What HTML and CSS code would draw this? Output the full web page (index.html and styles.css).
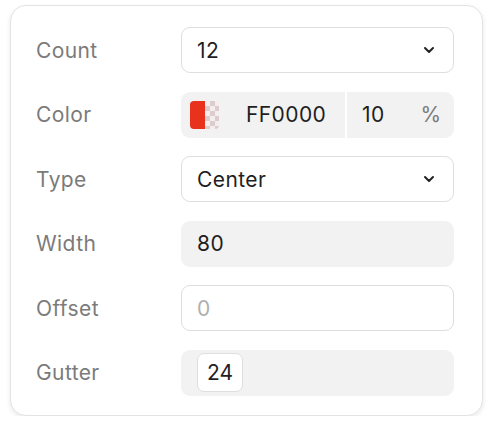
FILE: index.html
```html
<!DOCTYPE html>
<html>
<head>
<meta charset="utf-8">
<link rel="stylesheet" href="styles.css">
</head>
<body>
<div class="card">
  <div class="row">
    <div class="label">Count</div>
    <div class="field select">
      <span class="value">12</span>
      <svg class="chev" width="12" height="8" viewBox="0 0 12 8"><path d="M2 2 L6 6 L10 2" fill="none" stroke="#222" stroke-width="2" stroke-linecap="round" stroke-linejoin="round"/></svg>
    </div>
  </div>
  <div class="row">
    <div class="label">Color</div>
    <div class="field filled color">
      <div class="hex">
        <span class="swatch"><span class="swatch-solid"></span><span class="swatch-alpha"></span></span>
        <span class="value hexval">FF0000</span>
      </div>
      <div class="divider"></div>
      <div class="alpha">
        <span class="value">10</span>
        <span class="pct">%</span>
      </div>
    </div>
  </div>
  <div class="row">
    <div class="label">Type</div>
    <div class="field select">
      <span class="value">Center</span>
      <svg class="chev" width="12" height="8" viewBox="0 0 12 8"><path d="M2 2 L6 6 L10 2" fill="none" stroke="#222" stroke-width="2" stroke-linecap="round" stroke-linejoin="round"/></svg>
    </div>
  </div>
  <div class="row">
    <div class="label">Width</div>
    <div class="field filled">
      <span class="value">80</span>
    </div>
  </div>
  <div class="row">
    <div class="label">Offset</div>
    <div class="field select">
      <span class="value placeholder">0</span>
    </div>
  </div>
  <div class="row">
    <div class="label">Gutter</div>
    <div class="field filled gutter">
      <span class="chip">24</span>
    </div>
  </div>
</div>
</body>
</html>
```

FILE: styles.css
```css
html, body {
  margin: 0;
  padding: 0;
  background: #ffffff;
}
body {
  font-family: Inter, "Noto Sans", sans-serif;
  padding: 5px 0 0 10px;
}
.card {
  width: 473px;
  height: 411px;
  box-sizing: border-box;
  border: 1px solid #e3e3e3;
  border-radius: 16px;
  background: #fff;
  box-shadow: 0 2px 5px rgba(0,0,0,0.09);
  padding: 21px 28px 18px 25px;
  display: flex;
  flex-direction: column;
  gap: 18.6px;
}
.row {
  display: grid;
  grid-template-columns: 145px 1fr;
  align-items: center;
}
.label {
  font-size: 21px;
  letter-spacing: 0.4px;
  color: #7b7b7b;
}
.field {
  height: 46px;
  box-sizing: border-box;
  border-radius: 9px;
  display: flex;
  align-items: center;
  padding: 0 16px;
}
.select {
  border: 1.5px solid #dedede;
  background: #fff;
  justify-content: space-between;
  padding-left: 15px;
}
.filled {
  background: #f2f2f2;
}
.value {
  font-size: 21px;
  letter-spacing: 0.4px;
  color: #1f1f1f;
}
.placeholder {
  color: #b0b0b0;
}
.chev {
  margin-right: 2px;
}
.color {
  padding: 0;
}
.hex {
  display: flex;
  align-items: center;
  width: 164px;
  padding-left: 9px;
  box-sizing: border-box;
}
.swatch {
  width: 29px;
  height: 28px;
  border-radius: 4px;
  overflow: hidden;
  display: flex;
}
.swatch-solid {
  width: 15px;
  background: #e8321c;
}
.swatch-alpha {
  flex: 1;
  background-color: #f5eeee;
  background-image:
    linear-gradient(45deg, #dccccc 25%, transparent 25%, transparent 75%, #dccccc 75%),
    linear-gradient(45deg, #dccccc 25%, transparent 25%, transparent 75%, #dccccc 75%);
  background-size: 10px 10px;
  background-position: 0 0, 5px 5px;
}
.hexval {
  margin-left: 27px;
}
.divider {
  width: 2px;
  align-self: stretch;
  background: #fff;
}
.alpha {
  flex: 1;
  display: flex;
  align-items: center;
  justify-content: space-between;
  padding: 0 13px 0 15px;
}
.pct {
  font-size: 21px;
  color: #7b7b7b;
}
.gutter {
  padding-left: 16px;
}
.chip {
  height: 39px;
  width: 46px;
  box-sizing: border-box;
  background: #fff;
  border: 1.5px solid #dedede;
  border-radius: 7px;
  font-size: 21px;
  color: #1f1f1f;
  display: flex;
  align-items: center;
  justify-content: center;
}
```
